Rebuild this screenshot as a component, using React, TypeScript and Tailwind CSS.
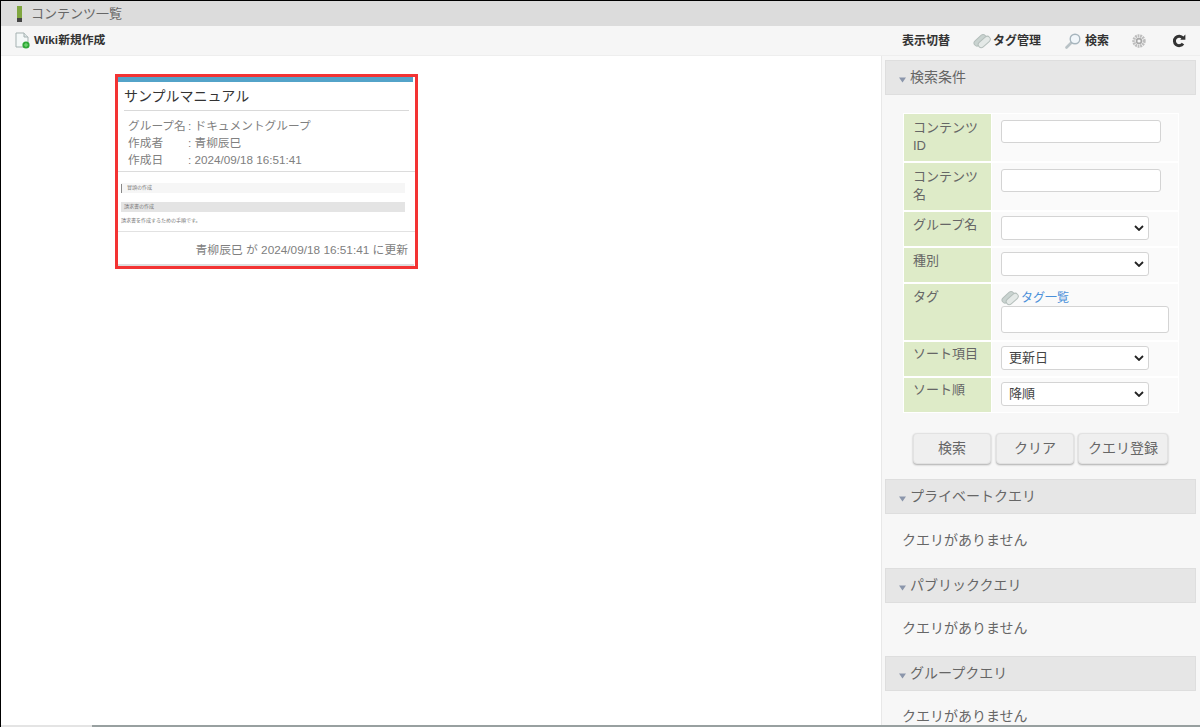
import React from "react";

const FONT = "font-['Liberation_Sans','Noto_Sans_CJK_JP',sans-serif]";

const TagIcon = ({ className }: { className?: string }) => (
  <svg viewBox="0 0 18 16" className={className}>
    <g transform="rotate(-42 9 8)">
      <rect x="1" y="3.2" width="14" height="6" rx="3" fill="#c9d3d0" stroke="#b4bebb" />
      <rect x="3" y="7.2" width="14" height="6" rx="3" fill="#e4e9e7" stroke="#b4bebb" />
    </g>
  </svg>
);

const Caret = () => (
  <svg viewBox="0 0 7 6" className="mr-[4px] mt-[5px] h-[6px] w-[7px] shrink-0">
    <path d="M0 0.5H7L3.5 5.5Z" fill="#8b96ab" />
  </svg>
);

const Chevron = () => (
  <svg viewBox="0 0 10 6" className="h-[6px] w-[10px]">
    <path d="M1 1L5 5L9 1" fill="none" stroke="#222" strokeWidth="1.8" />
  </svg>
);

const SectionHead = ({ title }: { title: string }) => (
  <div className="ml-[3px] mr-[4px] flex h-[35px] items-center border border-[#dedede] bg-[#e6e6e6] pl-[13px] text-[14px] text-[#666]">
    <Caret />
    <span>{title}</span>
  </div>
);

const Row = ({
  label,
  h,
  children,
}: {
  label: React.ReactNode;
  h: string;
  children: React.ReactNode;
}) => (
  <div className={`flex ${h}`}>
    <div className="w-[87px] bg-[#deebc8] pl-[9px] pt-[4px] text-[13px] leading-[18px] text-[#666]">
      {label}
    </div>
    <div className="ml-[1px] flex-1 bg-[#fafafa] pl-[9px]">{children}</div>
  </div>
);

const TextBox = ({ className }: { className: string }) => (
  <div className={`rounded-[3px] border border-[#d4d4d4] bg-white ${className}`} />
);

const Select = ({ value }: { value?: string }) => (
  <div className="mt-[4px] flex h-[24px] w-[148px] items-center justify-between rounded-[3px] border border-[#d4d4d4] bg-white pl-[7px] pr-[4px] text-[13px] text-[#444]">
    <span>{value}</span>
    <Chevron />
  </div>
);

const Button = ({ label, w }: { label: string; w: string }) => (
  <div
    className={`flex h-[31px] items-center justify-center rounded-[4px] border border-[#e2e2e2] bg-[#efefef] text-[14px] text-[#666] shadow-[0_1px_2px_rgba(0,0,0,0.3)] ${w}`}
  >
    {label}
  </div>
);

const NoQuery = ({ h }: { h: string }) => (
  <div className={`flex items-center pb-[2px] pl-[20px] text-[14px] text-[#666] ${h}`}>クエリがありません</div>
);

export default function App() {
  return (
    <div className={`flex h-[727px] w-[1200px] flex-col overflow-hidden border-l border-t border-black bg-white ${FONT}`}>
      {/* title bar */}
      <div className="flex h-[25px] shrink-0 items-center bg-[#dcdcdc] pl-[16px] text-[13px] text-[#666]">
        <div className="mr-[10px] flex h-[16px] w-[5px] flex-col">
          <div className="flex-1 bg-[#7fa63f]" />
          <div className="h-[4px] bg-[#444]" />
        </div>
        <span className="-ml-[1px]">コンテンツ一覧</span>
      </div>

      {/* toolbar */}
      <div className="flex h-[30px] shrink-0 items-center justify-between border-b border-[#eeeeee] bg-[#f6f6f6] text-[12px] font-bold text-[#333]">
        <div className="flex items-center pl-[14px]">
          <svg viewBox="0 0 15 17" className="mr-[4px] h-[17px] w-[15px]">
            <path d="M1 1H9L13 5V15H1Z" fill="#f4f8f8" stroke="#a5b1b1" />
            <path d="M9 1V5H13" fill="#dde5e5" stroke="#a5b1b1" />
            <circle cx="11" cy="13" r="3.6" fill="#2ea836" />
            <path d="M9 13H13M11 11V15" stroke="#7fdc7f" strokeWidth="1" />
          </svg>
          <span className="text-[11.8px]">Wiki新規作成</span>
        </div>
        <div className="flex items-center pr-[14px]">
          <span className="mr-[23px]">表示切替</span>
          <TagIcon className="mr-[2px] h-[16px] w-[18px]" />
          <span className="mr-[24px]">タグ管理</span>
          <svg viewBox="0 0 16 16" className="mr-[4px] h-[16px] w-[16px]">
            <path d="M6.5 9.5L1.5 14.5" stroke="#b9c2c6" strokeWidth="2.6" strokeLinecap="round" />
            <circle cx="10" cy="6" r="4.8" fill="#f1f6fa" stroke="#a7b5bd" strokeWidth="1.4" />
          </svg>
          <span className="mr-[23px]">検索</span>
          <svg viewBox="0 0 14 14" className="mr-[26px] h-[14px] w-[14px]">
            <circle cx="7" cy="7" r="5.2" fill="none" stroke="#bdbdbd" strokeWidth="3" strokeDasharray="1.8 0.7" />
            <circle cx="7" cy="7" r="2.4" fill="none" stroke="#a8a8a8" strokeWidth="1.6" />
          </svg>
          <svg viewBox="0 0 14 14" className="h-[14px] w-[14px]">
            <path d="M11 9.6A4.7 4.7 0 1 1 10.8 4" fill="none" stroke="#333" strokeWidth="3" />
            <path d="M8.2 5.8H13.4V0.6Z" fill="#333" />
          </svg>
        </div>
      </div>

      {/* body */}
      <div className="flex min-h-0 flex-1">
        <main className="flex-1 pl-[114px] pt-[18px]">
          <div className="flex h-[195px] w-[303px] flex-col border-[3px] border-[#f33333] bg-white">
            <div className="mr-[2px] h-[5px] shrink-0 bg-[#53a3c9]" />
            <div className="mx-[6px] flex h-[29px] shrink-0 items-center border-b border-[#d9d9d9] text-[14px] text-[#333]">
              サンプルマニュアル
            </div>
            <div className="flex h-[61px] shrink-0 flex-col justify-center border-b border-[#dcdcdc] pl-[10px] pt-[2px] text-[11.7px] leading-[17px] text-[#808080]">
              <div className="flex">
                <span className="w-[60px]">グループ名</span>
                <span>: ドキュメントグループ</span>
              </div>
              <div className="flex">
                <span className="w-[60px]">作成者</span>
                <span>: 青柳辰巳</span>
              </div>
              <div className="flex">
                <span className="w-[60px]">作成日</span>
                <span>: 2024/09/18 16:51:41</span>
              </div>
            </div>
            <div className="flex h-[60px] shrink-0 flex-col border-b border-[#e2e2e2] pl-[3px] pr-[10px] pt-[11px] text-[5px] text-[#777]">
              <div className="flex h-[10px] items-center bg-[#f6f6f6] pl-[6px]">
                <span className="-ml-[6px] mr-[5px] h-[9px] w-[1px] bg-[#888]" />
                <span>冒頭の作成</span>
              </div>
              <div className="mt-[9px] flex h-[10px] items-center bg-[#e4e4e4] pl-[3px]">請求書の作成</div>
              <div className="mt-[4px] leading-[8px]">請求書を作成するための手順です。</div>
            </div>
            <div className="flex flex-1 items-center justify-end pr-[7px] pt-[5px] text-[11.8px] text-[#808080]">
              青柳辰巳 が 2024/09/18 16:51:41 に更新
            </div>
            <div className="mr-[1px] h-[2px] shrink-0 bg-[#dedede]" />
          </div>
        </main>

        <aside className="w-[319px] shrink-0 border-l border-[#e8e8e8] bg-[#f7f7f7] pt-[4px]">
          <SectionHead title="検索条件" />
          <div className="ml-[21px] mt-[18px] flex w-[276px] flex-col gap-[2px] bg-white p-[1px]">
            <Row label={<span className="block pt-[1px]">コンテンツ<br />ID</span>} h="h-[47px]">
              <TextBox className="mt-[6px] h-[23px] w-[160px]" />
            </Row>
            <Row label={<span className="block pt-[1px]">コンテンツ<br />名</span>} h="h-[47px]">
              <TextBox className="mt-[6px] h-[23px] w-[160px]" />
            </Row>
            <Row label="グループ名" h="h-[34px]">
              <Select />
            </Row>
            <Row label="種別" h="h-[34px]">
              <Select />
            </Row>
            <Row label="タグ" h="h-[56px]">
              <div className="mt-[6px] flex h-[16px] items-center text-[12px] text-[#4a90d9]">
                <TagIcon className="mr-[2px] h-[16px] w-[18px]" />
                <span>タグ一覧</span>
              </div>
              <TextBox className="h-[27px] w-[168px]" />
            </Row>
            <Row label={<span className="-mt-[1px] block">ソート項目</span>} h="h-[34px]">
              <Select value="更新日" />
            </Row>
            <Row label={<span className="-mt-[1px] block">ソート順</span>} h="h-[34px]">
              <Select value="降順" />
            </Row>
          </div>

          <div className="ml-[31px] mt-[20px] flex gap-[4px]">
            <Button label="検索" w="mr-[1px] w-[78px]" />
            <Button label="クリア" w="w-[78px]" />
            <Button label="クエリ登録" w="w-[90px]" />
          </div>

          <div className="mt-[15px]">
            <SectionHead title="プライベートクエリ" />
            <NoQuery h="h-[54px]" />
            <SectionHead title="パブリッククエリ" />
            <NoQuery h="h-[53px]" />
            <SectionHead title="グループクエリ" />
            <NoQuery h="h-[52px]" />
          </div>
        </aside>
      </div>

      {/* bottom edge of the captured window */}
      <div className="flex h-[2px] shrink-0">
        <div className="w-[91px] bg-[#e4e4e4]" />
        <div className="flex-1 bg-[#98a0a0]" />
      </div>
    </div>
  );
}
